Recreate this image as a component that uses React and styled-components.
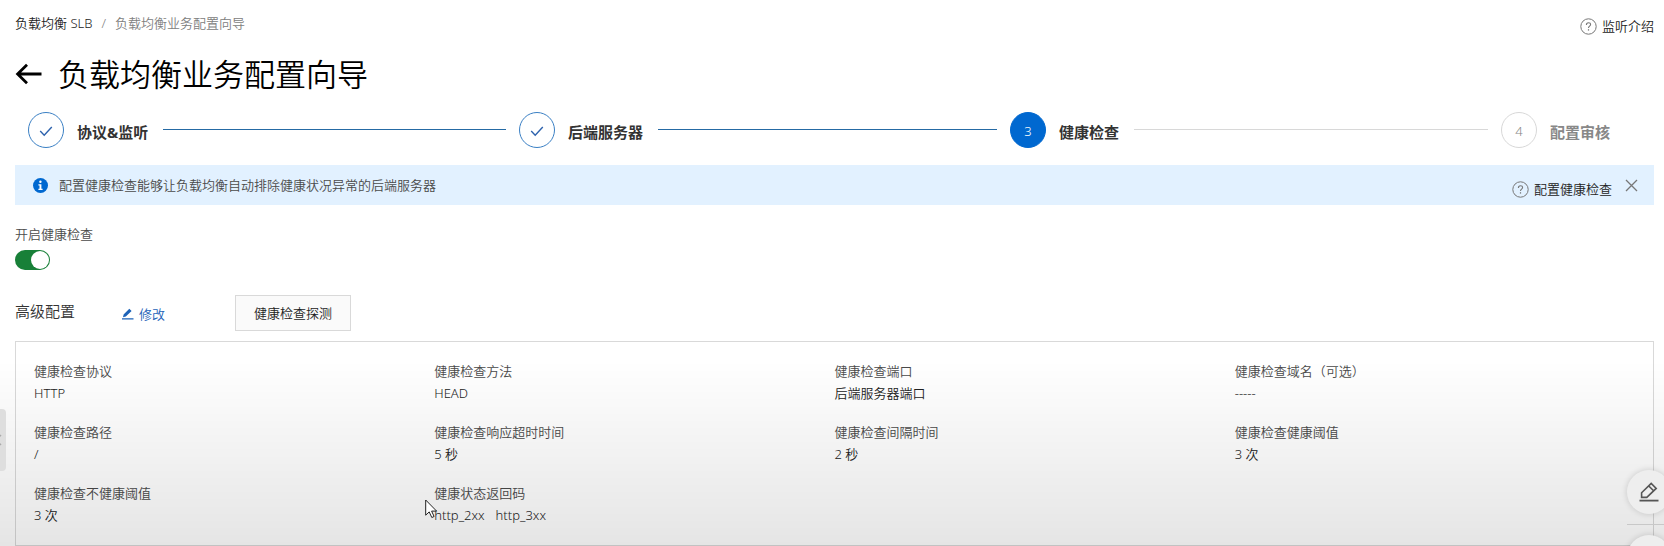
import React, { useState } from "react";
import styled, { createGlobalStyle, css } from "styled-components";

const GlobalStyle = createGlobalStyle`
  *, *::before, *::after { box-sizing: border-box; }
  body {
    margin: 0;
    background: #fff;
    color: #333;
    font-family: "Noto Sans", "Noto Sans CJK SC", sans-serif;
    font-size: 13px;
    font-weight: 350;
    line-height: 22px;
    overflow: hidden;
  }
  button, input { font: inherit; }
  button { cursor: pointer; }
  svg { display: block; flex: none; }
`;

const Page = styled.main`
  padding: 12px 10px 0 15px;
`;

const TopBar = styled.header`
  display: flex;
  justify-content: space-between;
  align-items: flex-start;
  height: 32px;
`;

const Breadcrumb = styled.nav`
  display: flex;
  gap: 9px;
  color: #808080;
`;

const CrumbLink = styled.a`
  color: #222;
  text-decoration: none;
`;

const HelpLink = styled.a`
  display: flex;
  align-items: center;
  gap: 5px;
  padding-top: 3px;
  color: #222;
  text-decoration: none;
`;

const TitleRow = styled.div`
  display: flex;
  align-items: center;
  gap: 16px;
  height: 60px;
`;

const BackButton = styled.button`
  padding: 0;
  border: 0;
  background: none;
  color: #000;
`;

const Title = styled.h1`
  margin: 0;
  color: #000;
  font-size: 31px;
  font-weight: 350;
  line-height: 44px;
`;

const Steps = styled.ol`
  display: flex;
  margin: 8px 0 0;
  padding: 0 44px 0 13px;
  list-style: none;
`;

const Step = styled.li`
  display: flex;
  align-items: center;
  gap: 13px;
  flex: ${(p) => (p.$last ? "none" : "1 1 0")};
  padding-right: ${(p) => (p.$last ? 0 : 13)}px;
`;

const circleLook = {
  done: css`
    border-color: #3a7fc4;
    color: #2d62ad;
  `,
  current: css`
    border-color: #0068d0;
    background: #0068d0;
    color: #fff;
  `,
  waiting: css`
    border-color: #d8d8d8;
    color: #888;
  `,
};

const StepCircle = styled.span`
  display: flex;
  align-items: center;
  justify-content: center;
  flex: none;
  width: 36px;
  height: 36px;
  padding-top: 2px;
  border: 1px solid;
  border-radius: 50%;
  ${(p) => circleLook[p.$state]}
`;

const StepLabel = styled.span`
  padding-top: 4px;
  color: ${(p) => (p.$state === "waiting" ? "#888" : "#333")};
  font-size: 15px;
  font-weight: 700;
  white-space: nowrap;
`;

const StepLine = styled.span`
  flex: 1;
  height: 1px;
  margin: 0 0 2px 2px;
  background: ${(p) => (p.$state === "done" ? "#256aa4" : "#d8d8d8")};
`;

const Banner = styled.section`
  display: flex;
  align-items: center;
  gap: 11px;
  height: 40px;
  margin-top: 17px;
  padding: 0 16px 0 18px;
  background: #e2f1ff;
`;

const BannerText = styled.p`
  flex: 1;
  margin: 0;
  color: #4a4a4a;
`;

const BannerHelp = styled(HelpLink)`
  padding: 8px 2px 0 0;
`;

const CloseButton = styled.button`
  padding: 0;
  border: 0;
  background: none;
  color: #777;
`;

const SwitchField = styled.div`
  display: flex;
  flex-direction: column;
  align-items: flex-start;
  gap: 5px;
  margin-top: 18px;
  color: #4a4a4a;
`;

const Switch = styled.input`
  appearance: none;
  width: 35px;
  height: 20px;
  margin: 0;
  padding: 1px;
  border-radius: 10px;
  background: ${(p) => (p.checked ? "#188038" : "#bbb")};
  cursor: pointer;

  &::before {
    content: "";
    display: block;
    width: 18px;
    height: 18px;
    margin-left: ${(p) => (p.checked ? "auto" : "0")};
    border-radius: 50%;
    background: #fff;
  }
`;

const SectionBar = styled.div`
  display: flex;
  align-items: center;
  height: 36px;
  margin-top: 25px;
`;

const SectionTitle = styled.h2`
  width: 106px;
  margin: 0;
  padding-bottom: 4px;
  font-size: 15px;
  font-weight: 350;
`;

const EditButton = styled.button`
  display: flex;
  align-items: center;
  gap: 5px;
  width: 114px;
  padding: 2px 0 0;
  border: 0;
  background: none;
  color: #1c62b8;
`;

const ProbeButton = styled.button`
  height: 36px;
  padding: 0 18px;
  border: 1px solid #d9d9d9;
  background: #fafafa;
  color: #222;
`;

const Panel = styled.dl`
  display: grid;
  grid-template-columns: repeat(4, 1fr);
  row-gap: 17px;
  margin: 10px 0 0;
  padding: 18px 18px 19px;
  border: 1px solid #d9d9d9;
`;

const Term = styled.dt`
  color: #4a4a4a;
`;

const Value = styled.dd`
  display: flex;
  gap: 11px;
  margin: 0;
  color: #222;
`;

const BottomShade = styled.div`
  position: fixed;
  inset: auto 0 0;
  height: 186px;
  background: linear-gradient(rgba(0, 0, 0, 0), rgba(0, 0, 0, 0.1));
  pointer-events: none;
`;

const DrawerHandle = styled.button`
  position: fixed;
  left: 0;
  bottom: 75px;
  display: flex;
  align-items: center;
  justify-content: flex-start;
  width: 6px;
  height: 62px;
  padding: 0;
  border: 0;
  border-radius: 0 4px 4px 0;
  background: #dedede;
  color: #aaa;
`;

const FloatTools = styled.div`
  position: fixed;
  right: -7px;
  bottom: -33px;
  display: flex;
  flex-direction: column;
  align-items: center;
  gap: 10px;
`;

const FloatButton = styled.button`
  display: flex;
  align-items: center;
  justify-content: center;
  width: 44px;
  height: 44px;
  padding: 0;
  border: 0;
  border-radius: 50%;
  background: #eee;
  box-shadow: 0 0 6px rgba(0, 0, 0, 0.16);
  color: #555;
`;

const FloatDivider = styled.span`
  width: 44px;
  height: 1px;
  background: #c8c8c8;
`;

const Pointer = styled.svg`
  position: fixed;
  left: 425px;
  bottom: 27px;
  pointer-events: none;
`;

const HelpIcon = () => (
  <svg width="17" height="17" viewBox="0 0 17 17" fill="none" stroke="#777" aria-hidden="true">
    <circle cx="8.5" cy="8.5" r="7.7" />
    <path d="M6.4 6.9c0-1.4.9-2.2 2.1-2.2s2.1.8 2.1 1.9c0 1.5-2.1 1.6-2.1 3.3" strokeWidth="1.1" />
    <path d="M8.5 11.2v1.4" strokeWidth="1.2" />
  </svg>
);

const CheckIcon = () => (
  <svg width="14" height="12" viewBox="0 0 14 12" fill="none" stroke="currentColor" strokeWidth="1.4" aria-label="已完成">
    <path d="M1.2 6l4 4.2L12.8 2" />
  </svg>
);

const BackIcon = () => (
  <svg width="27" height="22" viewBox="0 0 27 22" fill="none" stroke="currentColor" strokeWidth="2.8" aria-hidden="true">
    <path d="M26.500 11H3M12 1.800L2.600 11l9.400 9.200" />
  </svg>
);

const InfoIcon = () => (
  <svg width="15" height="15" viewBox="0 0 15 15" aria-hidden="true">
    <circle cx="7.5" cy="7.5" r="7.5" fill="#0068d0" />
    <circle cx="7.4" cy="3.7" r="1.2" fill="#fff" />
    <path d="M5.4 6.2h3v4.6h1.2v1.3H5.4v-1.3h1.1V7.5H5.4z" fill="#fff" />
  </svg>
);

const CloseIcon = () => (
  <svg width="13" height="13" viewBox="0 0 13 13" fill="none" stroke="currentColor" strokeWidth="1.3" aria-hidden="true">
    <path d="M1 1l11 11M12 1L1 12" />
  </svg>
);

const PencilIcon = () => (
  <svg width="13" height="12" viewBox="0 0 13 12" fill="currentColor" aria-hidden="true">
    <path d="M2 9.2l.6-2.8L8.3.8l2.3 2.1-5.8 5.7zM1 10.3h11.5v1.3H1z" />
  </svg>
);

const NoteIcon = () => (
  <svg width="20" height="20" viewBox="0 0 20 20" fill="none" stroke="currentColor" strokeWidth="1.6" aria-hidden="true">
    <path d="M2.6 15.4v-4.6L12.2 1.4l5 5-9.4 9zM9.8 4l4.8 4.8" />
    <path d="M.5 18.6h19" strokeWidth="1.8" />
  </svg>
);

const ChevronIcon = () => (
  <svg width="4" height="16" viewBox="0 0 4 16" fill="none" stroke="currentColor" strokeWidth="1.5" aria-hidden="true">
    <path d="M1 3L-4 8l5 5" />
  </svg>
);

const steps = [
  { label: "协议&监听", state: "done" },
  { label: "后端服务器", state: "done" },
  { label: "健康检查", state: "current" },
  { label: "配置审核", state: "waiting" },
];

const settings = [
  ["健康检查协议", ["HTTP"]],
  ["健康检查方法", ["HEAD"]],
  ["健康检查端口", ["后端服务器端口"]],
  ["健康检查域名（可选）", ["-----"]],
  ["健康检查路径", ["/"]],
  ["健康检查响应超时时间", ["5 秒"]],
  ["健康检查间隔时间", ["2 秒"]],
  ["健康检查健康阈值", ["3 次"]],
  ["健康检查不健康阈值", ["3 次"]],
  ["健康状态返回码", ["http_2xx", "http_3xx"]],
];

export default function App() {
  const [enabled, setEnabled] = useState(true);

  return (
    <>
      <GlobalStyle />
      <Page lang="zh-CN">
        <TopBar>
          <Breadcrumb>
            <CrumbLink href="#slb">负载均衡 SLB</CrumbLink>
            <span>/</span>
            <span>负载均衡业务配置向导</span>
          </Breadcrumb>
          <HelpLink href="#listener">
            <HelpIcon />
            监听介绍
          </HelpLink>
        </TopBar>

        <TitleRow>
          <BackButton aria-label="返回">
            <BackIcon />
          </BackButton>
          <Title>负载均衡业务配置向导</Title>
        </TitleRow>

        <Steps>
          {steps.map(({ label, state }, i) => {
            const last = i === steps.length - 1;
            return (
              <Step key={label} $last={last}>
                <StepCircle $state={state}>{state === "done" ? <CheckIcon /> : i + 1}</StepCircle>
                <StepLabel $state={state}>{label}</StepLabel>
                {!last && <StepLine $state={state} />}
              </Step>
            );
          })}
        </Steps>

        <Banner>
          <InfoIcon />
          <BannerText>配置健康检查能够让负载均衡自动排除健康状况异常的后端服务器</BannerText>
          <BannerHelp href="#health-check">
            <HelpIcon />
            配置健康检查
          </BannerHelp>
          <CloseButton aria-label="关闭">
            <CloseIcon />
          </CloseButton>
        </Banner>

        <SwitchField>
          <label htmlFor="health-switch">开启健康检查</label>
          <Switch
            id="health-switch"
            type="checkbox"
            role="switch"
            checked={enabled}
            onChange={(e) => setEnabled(e.target.checked)}
          />
        </SwitchField>

        <SectionBar>
          <SectionTitle>高级配置</SectionTitle>
          <EditButton>
            <PencilIcon />
            修改
          </EditButton>
          <ProbeButton>健康检查探测</ProbeButton>
        </SectionBar>

        <Panel>
          {settings.map(([term, values]) => (
            <div key={term}>
              <Term>{term}</Term>
              <Value>
                {values.map((v) => (
                  <span key={v}>{v}</span>
                ))}
              </Value>
            </div>
          ))}
        </Panel>
      </Page>

      <BottomShade />
      <DrawerHandle aria-label="展开">
        <ChevronIcon />
      </DrawerHandle>
      <FloatTools>
        <FloatButton aria-label="反馈">
          <NoteIcon />
        </FloatButton>
        <FloatDivider />
        <FloatButton aria-label="更多" />
      </FloatTools>
      <Pointer width="13" height="20" viewBox="0 0 13 20" fill="#fff" stroke="#222" aria-hidden="true">
        <path d="M.7 1v15.2l3.5-3.3 2.6 5.6 2.3-1-2.5-5.4h5z" />
      </Pointer>
    </>
  );
}
